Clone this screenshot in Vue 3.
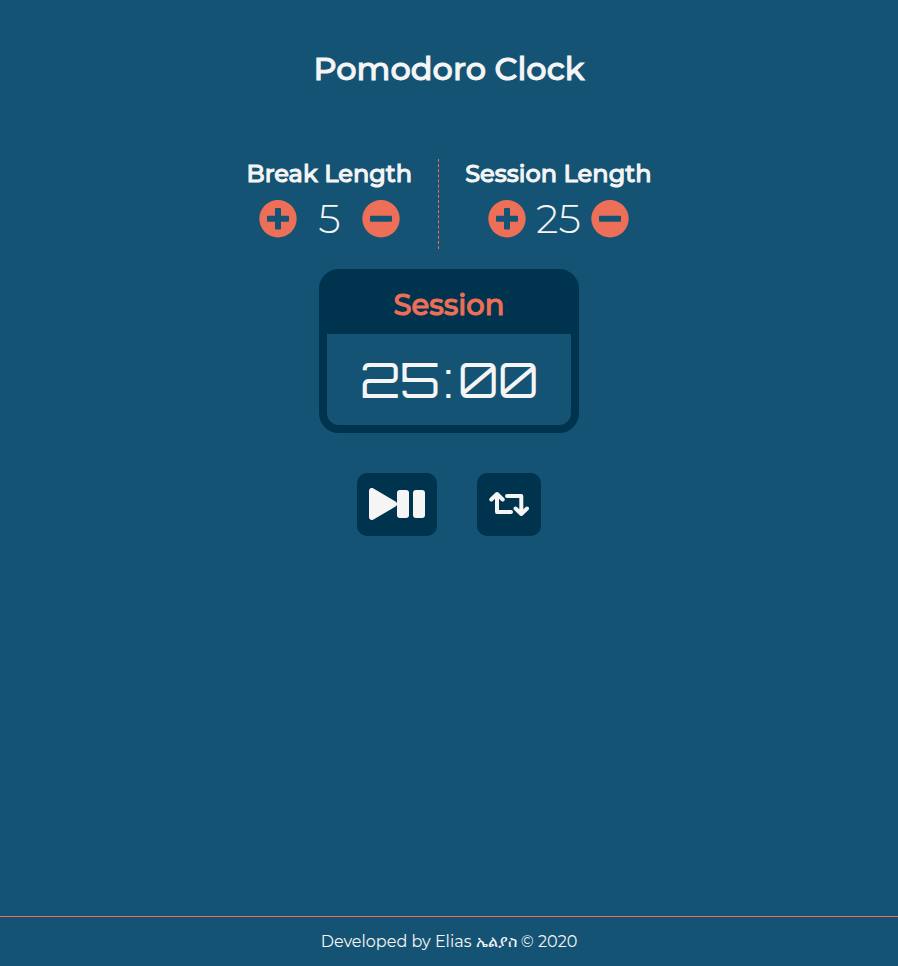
<script setup>
import { computed, onBeforeUnmount, reactive, ref } from 'vue'

const lengths = reactive([
  { id: 'break', label: 'Break Length', minutes: 5 },
  { id: 'session', label: 'Session Length', minutes: 25 },
])
const phase = ref(1)
const remaining = ref(25 * 60)
const timer = ref(null)

const pad = (n) => String(n).padStart(2, '0')
const phaseName = computed(() => (phase.value === 1 ? 'Session' : 'Break'))
const minutesLeft = computed(() => pad(Math.floor(remaining.value / 60)))
const secondsLeft = computed(() => pad(remaining.value % 60))

function change(index, step) {
  if (timer.value) return
  const item = lengths[index]
  item.minutes = Math.min(60, Math.max(1, item.minutes + step))
  if (index === phase.value) remaining.value = item.minutes * 60
}

function stop() {
  clearInterval(timer.value)
  timer.value = null
}

function tick() {
  if (remaining.value > 0) {
    remaining.value--
  } else {
    phase.value = 1 - phase.value
    remaining.value = lengths[phase.value].minutes * 60
  }
}

function toggle() {
  if (timer.value) stop()
  else timer.value = setInterval(tick, 1000)
}

function reset() {
  stop()
  lengths[0].minutes = 5
  lengths[1].minutes = 25
  phase.value = 1
  remaining.value = 25 * 60
}

onBeforeUnmount(stop)
</script>

<template>
  <div class="page">
    <main>
      <h1>Pomodoro Clock</h1>

      <div class="lengths">
        <section v-for="(item, i) in lengths" :key="item.id" class="length">
          <h2>{{ item.label }}</h2>
          <div class="stepper">
            <button type="button" class="round" :aria-label="`Increase ${item.label}`" @click="change(i, 1)">
              <svg viewBox="0 0 38 38" aria-hidden="true">
                <path fill-rule="evenodd" d="M19 0a18.700 18.700 0 1 0 0 37.400a18.700 18.700 0 1 0 0-37.400zM17 8h4a1 1 0 0 1 1 1v6.700h7a1 1 0 0 1 1 1v4a1 1 0 0 1-1 1h-7v6.700a1 1 0 0 1-1 1h-4a1 1 0 0 1-1-1v-6.700h-7a1 1 0 0 1-1-1v-4a1 1 0 0 1 1-1h7v-6.700a1 1 0 0 1 1-1z" />
              </svg>
            </button>
            <span class="minutes">{{ item.minutes }}</span>
            <button type="button" class="round" :aria-label="`Decrease ${item.label}`" @click="change(i, -1)">
              <svg viewBox="0 0 38 38" aria-hidden="true">
                <path fill-rule="evenodd" d="M19 0a18.700 18.700 0 1 0 0 37.400a18.700 18.700 0 1 0 0-37.400zM9 15.700h20a1 1 0 0 1 1 1v4a1 1 0 0 1-1 1h-20a1 1 0 0 1-1-1v-4a1 1 0 0 1 1-1z" />
              </svg>
            </button>
          </div>
        </section>
      </div>

      <section class="timer">
        <h2>{{ phaseName }}</h2>
        <div class="time">
          <span>{{ minutesLeft }}</span>
          <span>:</span>
          <span>{{ secondsLeft }}</span>
        </div>
      </section>

      <div class="controls">
        <button type="button" aria-label="Start or pause" @click="toggle">
          <svg width="56" height="32" viewBox="0 0 56 32" aria-hidden="true">
            <path d="M0 3v26c0 2.500 2.400 3.700 4.500 2.600l22-13c2-1.200 2-4 0-5.200l-22-13c-2.100-1.200-4.500 0.100-4.500 2.600z" />
            <rect x="28" y="2" width="12" height="28" rx="3" />
            <rect x="44" y="2" width="12" height="28" rx="3" />
          </svg>
        </button>
        <button type="button" aria-label="Reset" @click="reset">
          <svg class="lines" width="40" height="32" viewBox="0 0 40 32" aria-hidden="true">
            <path d="M2.300 11.500L8 6l5.700 5.500M8 6v18h14" />
            <path d="M18 8h14.300v18M26.600 20.500l5.700 5.500l5.700-5.500" />
          </svg>
        </button>
      </div>
    </main>

    <footer>Developed by Elias ኤልያስ © 2020</footer>
  </div>
</template>

<style>
body {
  margin: 0;
  background: #145374;
}
</style>

<style scoped>
.page {
  display: flex;
  flex-direction: column;
  min-height: 100vh;
  color: #f6f5f5;
  font-family: Montserrat, Inter, "Noto Sans", sans-serif;
}

main {
  flex: 1;
  display: flex;
  flex-direction: column;
  align-items: center;
}

h1,
h2 {
  margin: 0;
  font-weight: 500;
  -webkit-text-stroke: 1px currentColor;
  white-space: nowrap;
}

h1 {
  padding: 49px 0 70px;
  font-size: 32px;
  line-height: 40px;
}

.lengths {
  display: flex;
}

.length {
  display: flex;
  flex-direction: column;
  align-items: center;
  height: 90px;
  padding: 0 26px;
}

.length + .length {
  border-left: 1px dashed #ee6f57;
}

.length h2 {
  font-size: 24px;
  line-height: 30px;
}

.stepper {
  display: flex;
  align-items: center;
  padding-top: 10px;
}

button {
  border: 0;
  padding: 0;
  cursor: pointer;
}

svg {
  display: block;
}

.round {
  width: 38px;
  height: 38px;
  border-radius: 50%;
  background: none;
  fill: #ee6f57;
}

.minutes {
  width: 65px;
  font-size: 40px;
  font-weight: 300;
  line-height: 40px;
  text-align: center;
}

.timer {
  box-sizing: border-box;
  width: 260px;
  margin-top: 20px;
  border: 8px solid #00334e;
  border-radius: 20px;
  background: #145374;
  text-align: center;
}

.timer h2 {
  padding: 8px 0 9px;
  background: #00334e;
  color: #ee6f57;
  font-size: 29px;
  line-height: 40px;
}

.time {
  display: flex;
  justify-content: center;
  gap: 4px;
  font-family: Orbitron, Inter, sans-serif;
  font-size: 48px;
  font-feature-settings: "zero";
  line-height: 91px;
}

.controls {
  display: flex;
  gap: 40px;
  margin-top: 40px;
}

.controls button {
  padding: 15px 12px 16px;
  border-radius: 10px;
  background: #00334e;
  fill: #f6f5f5;
}

.lines {
  fill: none;
  stroke: #f6f5f5;
  stroke-width: 4;
  stroke-linecap: round;
  stroke-linejoin: round;
}

footer {
  border-top: 1px solid #ee6f57;
  padding: 13px 0 12px;
  font-size: 16px;
  font-weight: 400;
  line-height: 24px;
  text-align: center;
}
</style>
